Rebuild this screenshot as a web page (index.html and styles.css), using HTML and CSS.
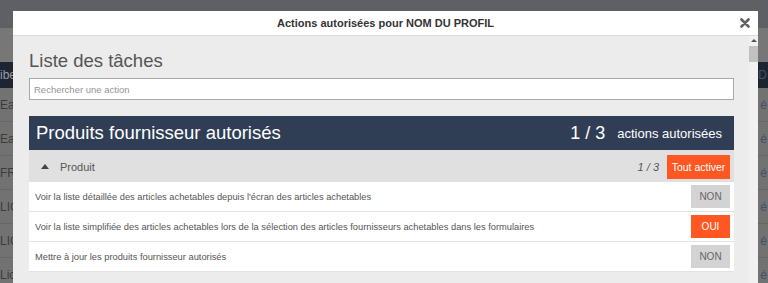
FILE: index.html
```html
<!DOCTYPE html>
<html lang="fr">
<head>
  <meta charset="UTF-8" />
  <title>Actions autorisées</title>
  <link rel="stylesheet" href="styles.css">
</head>
<body>
  <div class="page">
    <div class="page-top"></div>
    <div class="page-sub"></div>
    <div class="page-band"><span>ibe</span><span class="right">D</span></div>
    <div class="page-row"><span>Eas</span><span class="right">é</span></div>
    <div class="page-row"><span>Eas</span><span class="right">é</span></div>
    <div class="page-row"><span>FRE</span><span class="right">é</span></div>
    <div class="page-row"><span>LIG</span><span class="right">é</span></div>
    <div class="page-row"><span>LIC</span><span class="right">é</span></div>
    <div class="page-row"><span>Lic</span><span class="right">é</span></div>
  </div>

  <div class="modal">
    <div class="modal-header">
      <span class="modal-title">Actions autorisées pour NOM DU PROFIL</span>
      <svg class="close" width="10" height="10" viewBox="0 0 10 10">
        <path d="M1.5 1.5 L8.5 8.5 M8.5 1.5 L1.5 8.5" stroke="#606060" stroke-width="2.6" stroke-linecap="round" />
      </svg>
    </div>
    <div class="modal-body">
      <div class="content">
        <h2>Liste des tâches</h2>
        <input type="text" class="search" placeholder="Rechercher une action" />

        <div class="section">
          <div class="section-head">
            <span class="section-title">Produits fournisseur autorisés</span>
            <span class="count">1 / 3</span>
            <span class="count-label">actions autorisées</span>
          </div>
          <div class="group">
            <span class="caret"></span>
            <span class="group-name">Produit</span>
            <span class="group-count">1 / 3</span>
            <button class="btn-all">Tout activer</button>
          </div>
          <div class="row">
            <span>Voir la liste détaillée des articles achetables depuis l'écran des articles achetables</span>
            <button class="toggle">NON</button>
          </div>
          <div class="row">
            <span>Voir la liste simplifiée des articles achetables lors de la sélection des articles fournisseurs achetables dans les formulaires</span>
            <button class="toggle on">OUI</button>
          </div>
          <div class="row">
            <span>Mettre à jour les produits fournisseur autorisés</span>
            <button class="toggle">NON</button>
          </div>
        </div>
      </div>
      <div class="scrollbar">
        <span class="arrow"></span>
        <span class="thumb"></span>
      </div>
    </div>
  </div>
</body>
</html>
```

FILE: styles.css
```css
body {
  margin: 0;
  width: 768px;
  height: 283px;
  overflow: hidden;
  position: relative;
  font-family: 'Liberation Sans', Arial, sans-serif;
  background: #6e6e6e;
}

/* page behind the dimmed overlay */
.page-top {
  height: 28px;
  background: #5e6065;
}

.page-sub {
  height: 34px;
  background: #777777;
}

.page-band {
  height: 26px;
  background: #1f2530;
  color: #9a9ca0;
  font-size: 12px;
  display: flex;
  align-items: center;
  justify-content: space-between;
}

.page-row {
  height: 33px;
  border-bottom: 1px solid #666;
  background: #727272;
  color: #3c3c3c;
  font-size: 12px;
  display: flex;
  align-items: center;
  justify-content: space-between;
}

.page-row .right,
.page-band .right {
  color: #44506c;
  margin-right: 1px;
}

/* modal */
.modal {
  position: absolute;
  left: 13px;
  top: 11px;
  width: 745px;
  height: 272px;
  background: #ececec;
  display: flex;
  flex-direction: column;
}

.modal-header {
  height: 24px;
  background: #fff;
  border-bottom: 1px solid #d9d9d9;
  display: flex;
  align-items: center;
  justify-content: center;
  position: relative;
}

.modal-title {
  font-size: 11px;
  font-weight: bold;
  color: #333;
}

.close {
  position: absolute;
  right: 8px;
  top: 7px;
}

.modal-body {
  flex: 1;
  display: flex;
  overflow: hidden;
}

.content {
  flex: 1;
  padding: 14px 15px 0 16px;
}

h2 {
  margin: 0;
  font-size: 18.5px;
  line-height: 22px;
  font-weight: normal;
  color: #555;
}

.search {
  display: block;
  box-sizing: border-box;
  width: 100%;
  height: 22px;
  margin-top: 6px;
  border: 1px solid #a9a9a9;
  padding: 0 4px;
  font-family: inherit;
  font-size: 9.5px;
  background: #fff;
}

.search::placeholder {
  color: #959595;
}

.section {
  margin-top: 16px;
}

.section-head {
  height: 34px;
  background: #2f3e55;
  color: #fff;
  display: flex;
  align-items: center;
  padding: 0 12px 0 7px;
}

.section-title {
  font-size: 18.5px;
  flex: 1;
}

.count {
  font-size: 18px;
  margin-right: 12px;
}

.count-label {
  font-size: 13px;
}

.group {
  height: 32px;
  background: #e0e0e0;
  display: flex;
  align-items: center;
  padding: 1px 4px 0 12px;
  box-sizing: border-box;
  color: #555;
  font-size: 11px;
}

.caret {
  width: 0;
  height: 0;
  border-left: 4px solid transparent;
  border-right: 4px solid transparent;
  border-bottom: 5px solid #444;
  margin-right: 11px;
}

.group-name {
  flex: 1;
}

.group-count {
  font-style: italic;
  margin-right: 8px;
}

.btn-all {
  height: 24px;
  width: 63px;
  border: none;
  background: #ff5722;
  color: #fff;
  font-family: inherit;
  font-size: 10.5px;
  padding: 0;
}

.row {
  height: 29px;
  background: #fff;
  border-bottom: 1px solid #e3e3e3;
  display: flex;
  align-items: center;
  justify-content: space-between;
  padding: 0 4px 0 6px;
  font-size: 9.3px;
  color: #555;
}

.toggle {
  width: 39px;
  height: 23px;
  border: none;
  background: #d3d3d3;
  color: #666;
  font-family: inherit;
  font-size: 10px;
  padding: 0;
}

.toggle.on {
  background: #ff5722;
  color: #fff;
}

.scrollbar {
  width: 9px;
  background: #f1f1f1;
  display: flex;
  flex-direction: column;
  align-items: center;
  padding-top: 3px;
}

.arrow {
  width: 0;
  height: 0;
  border-left: 3px solid transparent;
  border-right: 3px solid transparent;
  border-bottom: 3px solid #505050;
}

.thumb {
  width: 9px;
  height: 16px;
  margin-top: 4px;
  background: #c1c1c1;
}
```
